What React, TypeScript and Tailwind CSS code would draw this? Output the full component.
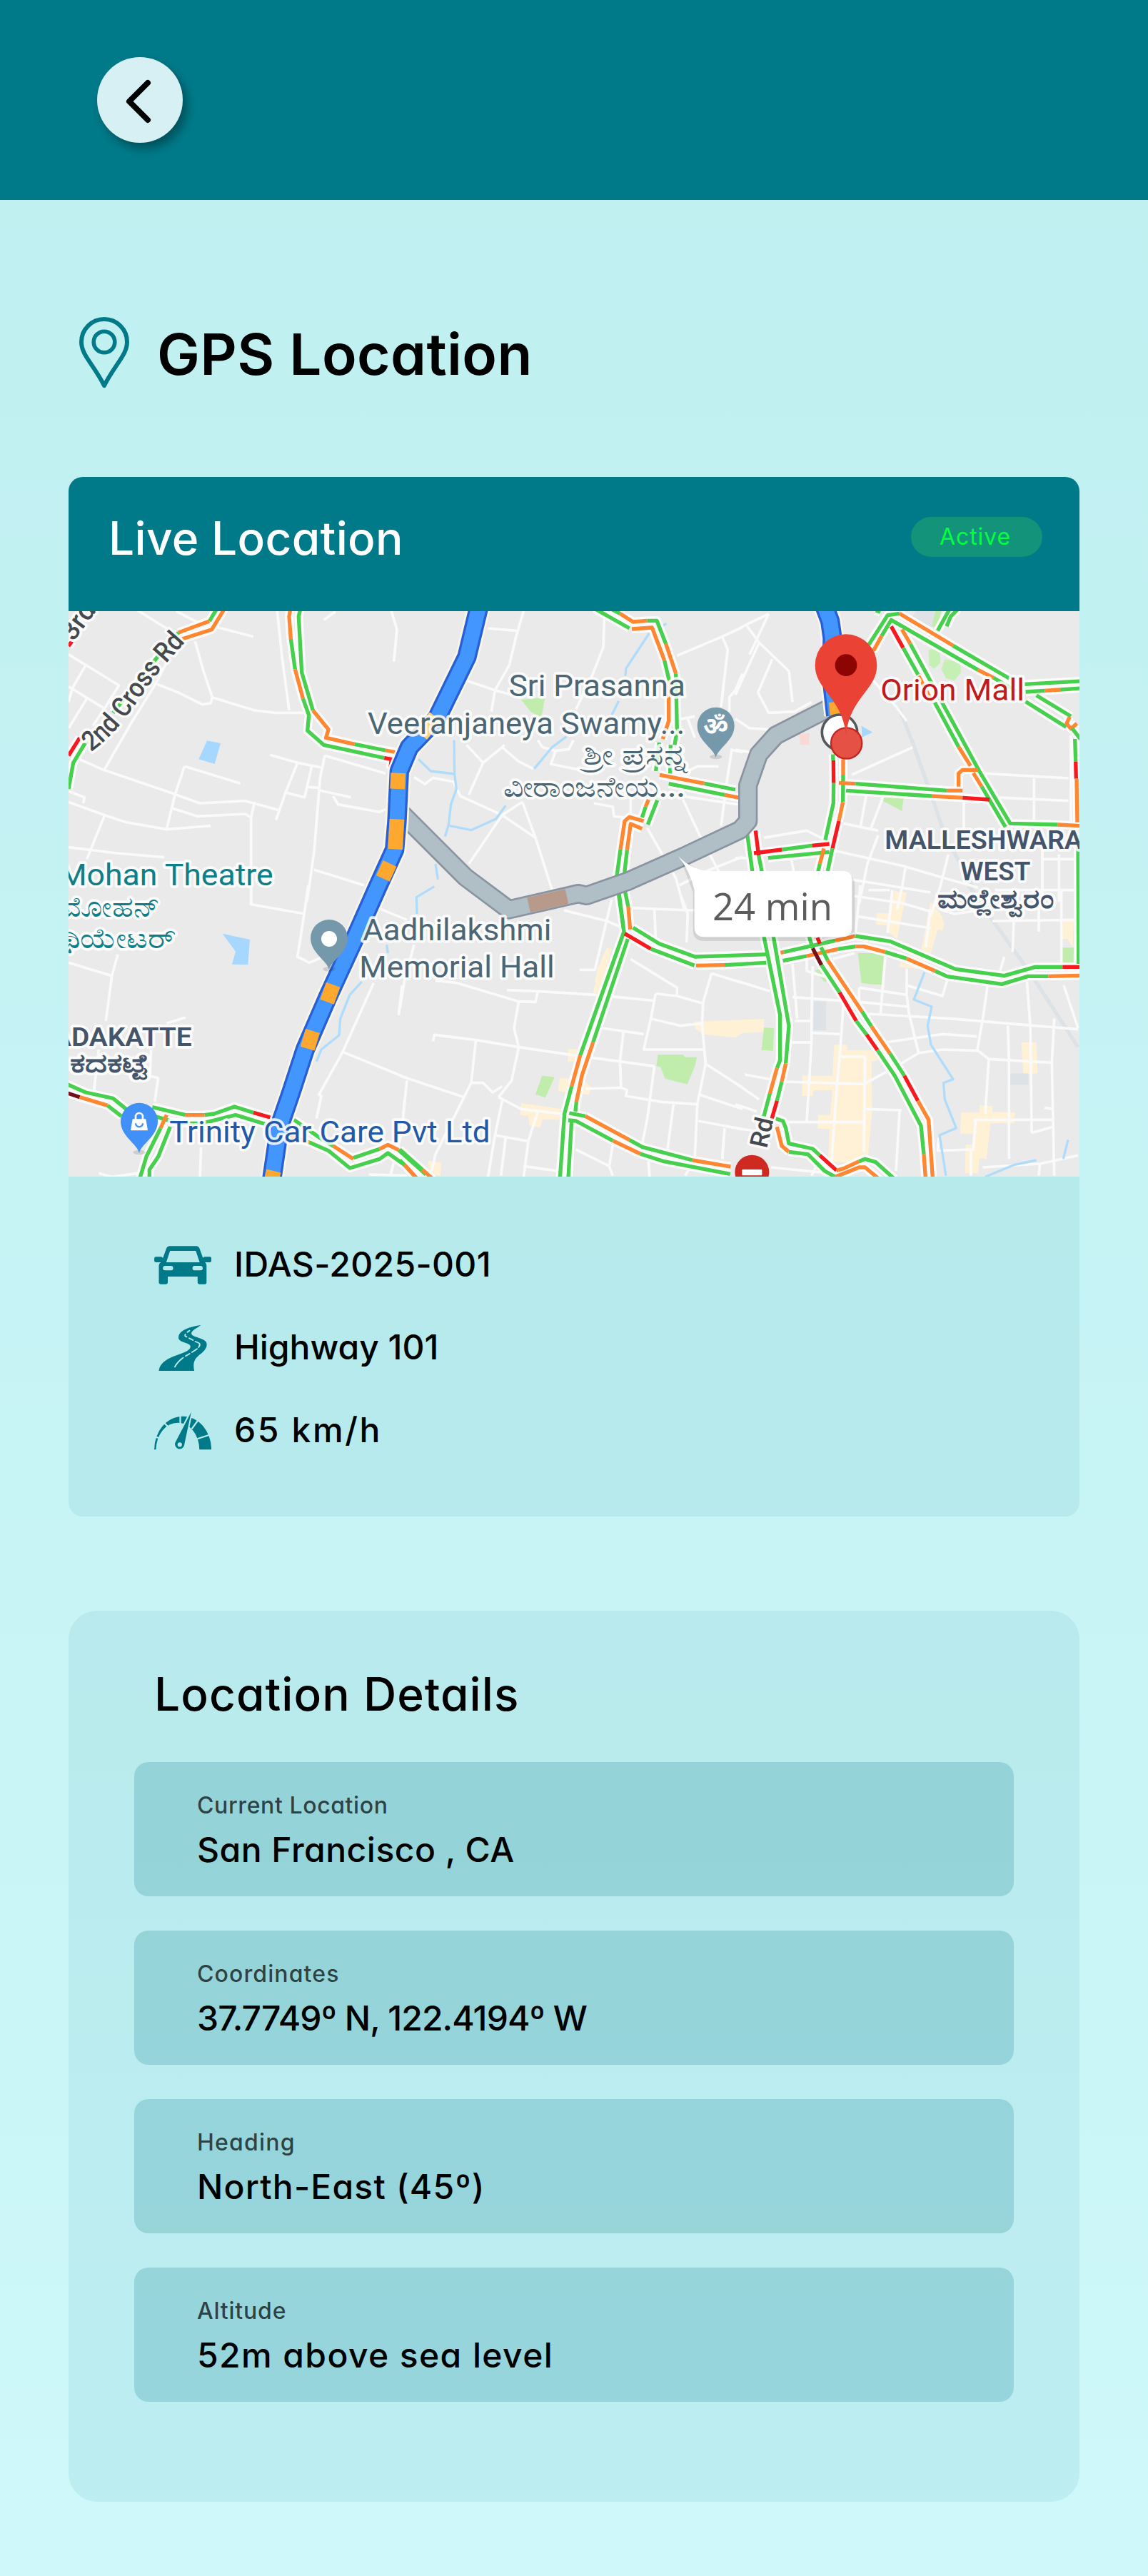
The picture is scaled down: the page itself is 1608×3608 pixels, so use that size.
import type { ReactNode } from "react";

/* ---------- Map data: six tiles, each drawn in its own coordinates ---------- */

type Tile = "A" | "B" | "C" | "D" | "E" | "F";

const tileOffset: Record<Tile, string> = {
  A: "translate(0 0)",
  B: "translate(1410 0)",
  C: "translate(2820 0)",
  D: "translate(0 1170)",
  E: "translate(1410 1170)",
  F: "translate(2820 1170)",
};

const streets: Record<Tile, string[]> = {
  A: [
    "300,10 430,90", "470,18 560,65 660,90 795,125", "550,145 585,270 622,380 615,405 580,410 480,360 390,325", "622,380 800,435 890,445 1010,445",
    "18,200 230,330 170,425 120,500", "90,245 35,340 18,400", "18,335 165,425", "95,385 18,510", "440,215 380,330 280,490 165,690",
    "18,620 165,685 430,775 570,825 760,815 905,855", "505,670 740,742", "505,670 465,790 430,935", "18,820 170,875 260,905 430,935 615,920",
    "450,845 560,880 760,870 785,885 785,1250 1010,1290", "170,875 95,1060", "18,1010 220,1035 420,1052", "800,820 785,885",
    "865,622 980,655 1080,675", "980,655 930,780 890,895", "930,780 1010,800 1040,670", "1095,625 1075,720 1050,1030 1020,1240",
    "1095,625 1350,700", "1070,770 1205,800", "1130,795 1150,830 1325,862 1350,850", "1025,757 1070,760", "895,18 915,210 945,435",
    "1375,18 1398,95 1385,230", "1090,55 1140,20", "1050,1105 1260,1170", "18,775 85,800 80,825",
  ],
  B: [
    "520,18 490,120 460,245 400,350 385,440", "370,90 490,100", "280,310 400,350 470,370", "860,40 855,170 800,310 740,430", "1165,205 1355,125 1440,85",
    "1355,125 1378,180 1350,420", "1440,280 1410,350 1385,380 1385,440", "1160,475 1240,460", "1210,470 1240,550",
    "280,580 350,655 430,590 440,580", "430,590 500,650 560,680", "350,655 290,790", "60,715 105,745 140,718 225,735 255,795 430,875 570,970 640,1190",
    "515,820 430,875 290,1080", "515,820 570,970", "580,560 600,590 655,605 635,660 780,690", "655,605 710,598 730,560", "815,825 895,840 900,880 945,885",
    "1190,700 1250,670 1340,670", "1395,600 1375,730 1350,920", "1190,810 1260,960 1345,1120", "1150,790 1420,830", "970,780 970,870",
    "1040,930 1160,1140 1195,1270", "1175,1170 1290,1110 1440,1050", "1390,600 1440,610",
  ],
  C: [
    "0,100 45,75 140,30", "45,75 100,150 225,270 240,400", "100,150 0,370", "140,30 60,200", "155,220 95,360 140,445 250,440 320,400", "0,470 60,510 140,515",
    "0,600 60,610", "490,705 745,590", "580,310 680,425 720,480", "455,910 600,940", "550,790 525,930", "620,800 570,930", "1050,700 1400,720", "1255,720 1255,910",
    "960,820 960,930", "1080,800 1400,815", "1410,540 1410,900", "120,970 300,940 380,980", "0,1055 70,1055", "235,1060 245,1110", "420,1025 710,1090 880,1140 1020,1180",
    "600,960 555,1080 520,1250", "715,1095 700,1180 680,1270", "480,1145 640,1170 820,1200", "895,1040 860,1180 820,1300", "1290,1010 1290,1240", "1360,1040 1360,1240", "1290,1060 1440,1060",
    "650,1190 560,1190", "1090,1190 1440,1190",
  ],
  D: [
    "18,325 200,380", "225,290 200,380 175,570", "430,580 510,555", "365,690 360,800 395,810 380,910", "145,690 125,860",
    "1025,0 1010,110 980,300 1030,325 1090,300", "1330,100 1440,145", "1300,410 1170,700 1070,880 1080,885 1060,980", "1170,700 1440,810", "1420,420 1405,545",
    "575,1100 570,1230", "145,1210 200,1225 310,1210", "1430,900 1420,1030 1370,1220", "1280,1215 1440,1220", "785,80 785,0",
  ],
  E: [
    "690,105 870,150 940,180", "890,60 820,355 755,355", "970,95 1215,105 1400,95", "1070,100 1075,220", "1180,40 1210,120 1205,240", "970,310 1165,430 1165,460",
    "1075,455 1165,465 1270,495", "1075,455 1055,560 1025,690 1280,690", "1055,560 1180,590 1270,580", "450,440 580,445 820,460 1070,485", "580,445 570,490 500,488 240,410 150,400",
    "500,488 480,600 500,680 470,820 415,890", "140,655 145,628 320,650 500,680 740,715 1070,760", "320,650 300,830 270,890 215,1000 150,1130 130,1220",
    "300,830 350,830 390,870 430,845", "0,800 270,890", "30,820 15,960", "415,890 510,940 680,960", "430,905 400,1050 370,1230", "400,1050 540,1075", "445,1060 425,1220",
    "580,950 540,1075 520,1230", "520,1180 660,1200", "850,600 1025,625", "940,615 925,740 930,850", "780,855 930,850 955,860 950,885 1100,910 1250,920",
    "1070,760 1040,980 1020,1080", "1310,370 1275,490 1270,580 1285,750 1250,920 1240,1140 1200,1220", "1285,750 1440,850", "1310,370 1440,410", "1260,880 1440,940",
    "1150,920 1125,1110", "740,1110 880,1180 895,1220", "895,1090 880,1180", "1045,1160 1050,1230", "1255,990 1440,1025", "1365,1020 1355,1150", "0,520 20,400 60,250",
  ],
  F: [
    "240,330 260,560", "240,470 520,490 725,510", "0,400 145,445", "250,570 320,570 325,340", "320,570 320,660 300,990", "320,620 440,625", "455,490 440,700 425,870 400,1220",
    "230,660 320,660", "40,795 200,825 540,835", "160,995 540,995", "540,835 660,770 770,705 870,690 1020,695 1065,730 1330,745", "440,720 545,720 540,1120",
    "545,940 700,945", "690,950 675,1200", "520,430 720,460 720,350", "520,430 520,490", "720,420 870,465 890,400", "630,300 610,540", "720,460 730,540 770,705",
    "560,540 900,560 1140,580 1440,605", "1060,420 1040,560 1015,700", "630,660 870,625 1015,635", "1145,590 1150,740 1150,1150", "1065,730 1050,960", "1225,400 1240,600 1245,1040",
    "1340,560 1330,745 1340,1220", "1000,985 1335,985", "1010,990 1000,1110 850,1115 855,1060", "1245,1040 1335,1015", "1300,935 1335,940", "990,1110 990,1220", "1380,420 1440,600",
    "1130,300 1110,370", "860,100 920,120 1060,100", "510,130 820,180", "660,20 640,200", "820,100 800,260", "1080,150 1440,145", "1170,150 1165,280", "1275,60 1275,195", "1370,20 1370,400",
    "1040,1185 1280,1170 1440,1135", "1280,1170 1275,1220", "300,310 300,360 380,385", "0,920 90,950", "0,830 100,900", "0,1020 70,1030", "150,1185 400,1210", "340,1180 320,1220", "410,310 500,285",
    "500,45 700,75 820,110", "525,0 505,200",
  ],
};

const areas: [Tile, string, string][] = [
  ["A", "#a6d8ff", "600,562 657,573 632,660 565,640"],
  ["D", "#a6d8ff", "665,203 780,228 772,334 705,332 720,278"],
  ["B", "#c0ecac", "510,390 610,380 595,465 550,440"],
  ["C", "#c0ecac", "840,18 865,18 850,90 822,80"],
  ["C", "#c6efb5", "812,180 858,175 862,235 835,260 815,245"],
  ["C", "#c6efb5", "880,220 945,235 948,275 920,310 885,300 866,262"],
  ["C", "#c0ecac", "622,800 707,800 700,858 620,815"],
  ["C", "#dfe3e8", "760,18 840,18 825,85 740,45"],
  ["C", "#a6d8ff", "530,500 577,527 532,548"],
  ["C", "#f8d9d6", "270,535 312,530 308,580 272,580"],
  ["C", "#d5efc8", "1425,560 1446,560 1446,640 1425,640"],
  ["E", "#c0ecac", "1085,712 1190,712 1200,722 1248,722 1240,760 1208,836 1115,812 1095,762 1078,760"],
  ["E", "#c0ecac", "598,800 650,806 612,892 570,878"],
  ["E", "#fff1d6", "510,915 680,940 680,985 600,985 590,1018 545,1010 540,970 505,965"],
  ["E", "#fff1d6", "708,688 745,688 745,740 705,740"],
  ["E", "#fff1d6", "672,810 770,815 805,850 795,880 665,865"],
  ["E", "#fff1d6", "870,262 890,265 850,440 812,460 830,350"],
  ["E", "#fff1d6", "1240,572 1530,562 1530,616 1440,620 1410,640 1275,626 1240,600"],
  ["E", "#fff1d6", "120,1158 175,1165 170,1220 118,1215"],
  ["F", "#c0ecac", "515,285 628,285 615,418 560,415 530,410"],
  ["F", "#c0ecac", "120,598 163,600 158,695 110,692"],
  ["F", "#c0ecac", "335,358 360,350 395,400 375,405"],
  ["F", "#c0ecac", "1370,262 1422,262 1420,330 1372,325"],
  ["F", "#fff1d6", "668,25 720,30 680,225 635,190 640,170 590,165 595,115 645,118"],
  ["F", "#fff1d6", "820,68 868,130 878,165 870,190 850,185 820,290 775,350 690,345 695,325 780,280"],
  ["F", "#fff1d6", "1378,140 1422,140 1418,260 1395,225 1368,225"],
  ["F", "#fff1d6", "415,670 470,670 470,692 540,692 600,690 600,735 572,740 575,945 555,1170 390,1160 395,1025 345,1022 348,965 398,965 408,860 330,860 325,885 280,885 280,800 408,800"],
  ["F", "#fff1d6", "1202,660 1265,660 1270,790 1210,795"],
  ["F", "#fff1d6", "1028,925 1080,928 1080,952 1175,955 1172,998 1072,1000 1055,1150 1025,1145 1020,1210 965,1208 968,1090 995,1088 998,1045 945,1045 948,955 1025,955"],
  ["F", "#dde2e7", "330,488 382,488 380,610 328,608"],
  ["F", "#dde2e7", "1155,790 1232,790 1232,838 1155,838"],
];

const water: [Tile, string][] = [
  ["B", "1120,70 1045,115 950,260 948,290"], ["B", "920,395 890,455"], ["B", "700,545 640,590 565,680"], ["B", "78,640 130,690 230,702 228,560"],
  ["B", "230,702 238,765 215,830 205,915 190,965"], ["B", "445,835 405,890 300,938 210,920"], ["B", "150,1080 160,1145"], ["B", "145,1175 70,1220 72,1290"],
  ["D", "1250,405 1200,460 1160,560 1155,630 1080,690 1060,740"], ["D", "1355,250 1360,285"],
  ["F", "795,365 750,480 825,510 808,590 822,670 915,815 875,830 880,900 928,1020 858,1050 885,1220"], ["F", "1265,1155 1170,1175 1050,1225"], ["F", "1398,1070 1378,1150"],
];

const railways: [Tile, string][] = [
  ["C", "690,430 745,570 830,810 880,960 1000,1180"],
  ["F", "980,0 1090,160 1240,370 1440,680"],
];

/* Traffic lanes: g = free, o = slow, r = heavy, d = blocked */
const laneColor: Record<string, string> = { g: "#47d04d", o: "#ff8731", r: "#f6191d", d: "#74101a" };
const lanes: [Tile, string, string][] = [
  ["A", "g", "640,10 610,60"], ["A", "o", "610,60 480,108"], ["A", "o", "672,10 620,95 495,135"],
  ["A", "g", "480,108 440,150 205,445"], ["A", "r", "65,550 18,625"], ["A", "g", "88,572 38,655 18,765"], ["A", "r", "18,165 32,145"],
  ["A", "o", "950,10 945,40 952,135"], ["A", "g", "952,135 970,262"], ["A", "o", "970,262 1003,385"], ["A", "g", "1003,385 1028,455 1022,520 1090,580 1345,635"], ["A", "r", "1345,635 1375,640 1370,680"],
  ["A", "g", "992,10 985,40 998,275 1045,435"], ["A", "o", "1045,435 1110,515 1100,550 1220,577"], ["A", "g", "1220,577 1350,603"], ["A", "o", "1350,603 1400,612"],
  ["B", "g", "820,8 965,90"], ["B", "g", "890,10 925,28"], ["B", "o", "925,28 980,63 1040,58"], ["B", "g", "1040,58 1080,58 1118,155"], ["B", "o", "1118,155 1160,280"], ["B", "g", "1160,280 1165,520 1155,580"],
  ["B", "o", "975,93 1060,87 1112,225"], ["B", "g", "1112,225 1132,310"], ["B", "o", "1130,310 1130,480 1105,555"],
  ["B", "g", "1138,580 1136,700"], ["B", "g", "1090,570 1076,690"], ["B", "o", "1092,706 1280,742"], ["B", "g", "1280,742 1410,768"], ["B", "g", "1130,743 1365,790"], ["B", "o", "1365,790 1430,803"],
  ["B", "o", "1045,810 1033,840"], ["B", "g", "1033,840 1018,885"], ["B", "g", "1082,812 1042,915"], ["B", "o", "1025,900 965,883 945,900 927,1020"], ["B", "o", "1018,932 970,912 955,1022"],
  ["B", "g", "927,1020 912,1130 940,1350"], ["B", "g", "955,1022 945,1110 945,1190 960,1260"],
  ["C", "g", "560,160 640,35 690,28"], ["C", "o", "690,28 915,163"], ["C", "g", "915,163 1150,300"], ["C", "g", "590,15 610,22"],
  ["C", "o", "580,185 615,122"], ["C", "g", "615,122 655,55 1020,265"], ["C", "o", "1020,265 1085,298"], ["C", "g", "1085,298 1180,355"],
  ["C", "g", "900,10 850,100"], ["C", "g", "935,10 905,40 888,82"],
  ["C", "r", "655,82 705,172"], ["C", "g", "705,172 768,285"], ["C", "o", "770,290 825,395"], ["C", "g", "838,402 938,588"], ["C", "o", "938,588 988,668"], ["C", "o", "1000,698 1035,755"], ["C", "g", "1035,755 1135,925"],
  ["C", "o", "700,95 735,155"], ["C", "g", "735,155 1025,690 1155,910 1355,915"], ["C", "o", "1355,915 1446,920"],
  ["C", "g", "1215,325 1450,312"], ["C", "g", "1220,357 1300,352"], ["C", "o", "1300,352 1365,348"], ["C", "g", "1365,348 1450,342"],
  ["C", "g", "1265,372 1410,460"], ["C", "g", "1220,398 1390,505"], ["C", "o", "1405,462 1392,490 1410,512 1435,490"], ["C", "g", "1415,510 1450,555"],
  ["C", "g", "1427,555 1430,650"], ["C", "r", "1430,650 1432,722"], ["C", "o", "1434,722 1437,905"], ["C", "g", "1440,960 1442,1500"],
  ["C", "g", "410,620 411,645"], ["C", "r", "412,645 413,740"], ["C", "g", "413,740 412,825 378,980"], ["C", "o", "453,640 453,705"], ["C", "g", "453,705 452,820"], ["C", "o", "452,820 435,900"], ["C", "r", "435,900 408,1015"], ["C", "g", "408,1015 388,1110"],
  ["C", "r", "395,996 322,1003"], ["C", "g", "322,1003 195,1020"], ["C", "r", "195,1020 78,1035"], ["C", "g", "395,1030 138,1055"], ["C", "o", "372,1015 355,1080"], ["C", "g", "355,1080 347,1115"],
  ["C", "r", "85,940 98,1045"], ["C", "g", "98,1045 112,1115"], ["C", "g", "50,955 72,1115"],
  ["C", "o", "435,740 505,743"], ["C", "g", "505,743 890,772"], ["C", "o", "890,772 955,772"], ["C", "g", "465,772 825,795"], ["C", "o", "825,795 955,802"], ["C", "r", "955,802 1068,810"], ["C", "o", "938,755 938,700 955,685 1020,685"],
  ["D", "g", "10,835 90,870 205,895 260,940"], ["D", "d", "10,872 65,890"], ["D", "o", "65,890 182,925"], ["D", "g", "182,925 240,970"],
  ["D", "g", "370,932 510,965"], ["D", "o", "510,965 590,965"], ["D", "g", "590,965 630,960 715,930 795,955"], ["D", "r", "795,955 875,978"],
  ["D", "g", "380,970 480,1000 580,1000 720,965 850,1005"], ["D", "g", "965,985 1080,1065 1130,1095"], ["D", "o", "1130,1095 1215,1150"], ["D", "g", "1215,1145 1325,1108"], ["D", "o", "1325,1108 1360,1090 1405,1112"], ["D", "g", "1405,1112 1520,1215"],
  ["D", "o", "950,1055 1030,1080"], ["D", "g", "1030,1080 1110,1115 1200,1188 1325,1150 1360,1125 1430,1175"], ["D", "o", "1430,1175 1480,1230"],
  ["D", "o", "430,965 405,1020"], ["D", "g", "405,1020 345,1140 318,1230"], ["D", "g", "445,1015 395,1140 358,1195 358,1230"],
  ["E", "g", "0,1110 95,1195"], ["E", "o", "95,1195 140,1235"], ["E", "g", "0,1155 20,1175"], ["E", "o", "20,1175 75,1235"],
  ["E", "o", "960,90 968,185"], ["E", "g", "920,40 942,195 758,715"], ["E", "g", "958,225 812,660"], ["E", "o", "812,660 765,800 742,910"], ["E", "g", "742,910 738,950"],
  ["E", "o", "758,715 722,845"], ["E", "g", "722,845 692,960 673,1230"], ["E", "g", "722,990 708,1230"],
  ["E", "g", "980,178 1090,245 1240,300 1550,290"], ["E", "r", "945,203 1055,267"], ["E", "g", "1055,267 1238,337"], ["E", "o", "1245,337 1365,335"], ["E", "g", "1365,335 1540,325"],
  ["E", "g", "712,957 780,970"], ["E", "o", "780,970 965,1070"], ["E", "g", "965,1070 1020,1100 1230,1155"], ["E", "o", "1230,1155 1390,1182"],
  ["E", "g", "708,987 740,990 895,1073"], ["E", "o", "895,1073 1010,1128"], ["E", "g", "1010,1128 1110,1160 1388,1213"],
  ["F", "o", "190,283 205,280"], ["F", "g", "205,280 420,232"], ["F", "o", "420,232 505,213"], ["F", "g", "505,213 650,235 925,352 1130,380 1260,343 1375,343"], ["F", "r", "1375,343 1450,343"],
  ["F", "g", "200,317 300,297"], ["F", "o", "300,297 430,268"], ["F", "g", "430,268 505,257"], ["F", "o", "505,257 540,257 630,280"], ["F", "g", "630,280 720,308"], ["F", "o", "720,308 840,360"], ["F", "g", "840,360 890,383 1120,415 1230,382 1315,382"], ["F", "o", "1315,382 1450,379"],
  ["F", "g", "120,215 188,545 188,735 175,768"], ["F", "o", "175,768 145,875"], ["F", "g", "145,875 120,970"],
  ["F", "g", "160,215 225,590 212,748"], ["F", "o", "212,748 195,825"], ["F", "g", "195,825 175,905"], ["F", "r", "175,905 152,985"],
  ["F", "g", "310,215 325,265"], ["F", "d", "325,265 362,335"], ["F", "g", "362,335 438,450"], ["F", "r", "438,450 508,570"], ["F", "g", "508,570 552,628"], ["F", "r", "552,628 597,692"], ["F", "g", "597,692 670,800 780,1010 792,1130"], ["F", "o", "792,1130 800,1240"],
  ["F", "r", "345,220 355,245"], ["F", "g", "360,260 388,315"], ["F", "o", "388,315 532,530"], ["F", "g", "532,530 572,593"], ["F", "o", "572,593 650,707"], ["F", "g", "650,707 710,800"], ["F", "r", "710,800 767,905"], ["F", "o", "767,905 812,985 830,1240"],
  ["F", "g", "170,980 200,990 212,1020 225,1085 325,1107 355,1135"], ["F", "r", "355,1135 425,1198"], ["F", "o", "425,1198 455,1190 520,1160"], ["F", "g", "520,1160 545,1150 590,1163 670,1235"],
  ["F", "o", "175,1015 195,1095 225,1120"], ["F", "g", "225,1120 305,1130 375,1200 420,1225"], ["F", "o", "420,1225 520,1185 545,1185 605,1235"],
];

const blueRoute = "1745,-10 1728,60 1692,210 1565,470 1450,590 1408,690 1398,900 1388,1020 1320,1170 1220,1395 1105,1645 1012,1860 950,2050 905,2180 870,2420";
const blueRouteEast = "3192,-10 3218,60 3228,130 3225,300 3242,455";
const greyRoute = "1412,862 1685,1135 1868,1272 2160,1205 2195,1213 2370,1152 2600,1050 2840,937 2873,900 2873,750 2918,620 2990,540 3215,425";
const slowParts = ["1403,698 1400,765", "1398,892 1391,1018", "1368,1078 1339,1141", "1130,1588 1104,1660", "1044,1782 1022,1856", "880,2370 868,2420"];

type MapLabel = { t: string; x: number; y: number; w?: number; s: number; c: string; weight?: number };
const slate = "#4b6674";
const labels: MapLabel[] = [
  { t: "Sri Prasanna", x: 1868, y: 375, w: 742, s: 126, c: slate },
  { t: "Veeranjaneya Swamy...", x: 1275, y: 533, w: 1333, s: 126, c: slate },
  { t: "ಶ್ರೀ ಪ್ರಸನ್ನ", x: 2180, y: 662, w: 440, s: 118, c: slate, weight: 500 },
  { t: "ವೀರಾಂಜನೇಯ...", x: 1846, y: 797, w: 764, s: 118, c: slate, weight: 500 },
  { t: "Orion Mall", x: 3430, y: 393, w: 605, s: 130, c: "#bf1a1c" },
  { t: "MALLESHWARA", x: 3448, y: 1017, w: 830, s: 112, c: "#44546b", weight: 600 },
  { t: "WEST", x: 3766, y: 1150, w: 294, s: 112, c: "#44546b", weight: 600 },
  { t: "ಮಲ್ಲೇಶ್ವರಂ", x: 3668, y: 1265, w: 490, s: 112, c: "#44546b", weight: 700 },
  { t: "Mohan Theatre", x: -22, y: 1170, w: 900, s: 130, c: "#0e7f88" },
  { t: "ಮೋಹನ್", x: -12, y: 1303, w: 415, s: 120, c: "#0e7f88", weight: 500 },
  { t: "ಥಿಯೇಟರ್", x: -22, y: 1435, w: 490, s: 120, c: "#0e7f88", weight: 500 },
  { t: "Aadhilakshmi", x: 1255, y: 1402, w: 792, s: 126, c: slate },
  { t: "Memorial Hall", x: 1240, y: 1558, w: 820, s: 126, c: slate },
  { t: "ADAKATTE", x: -48, y: 1845, w: 584, s: 112, c: "#44546b", weight: 600 },
  { t: "ಕದಕಟ್ಟೆ", x: 24, y: 1955, w: 332, s: 108, c: "#44546b", weight: 700 },
  { t: "Trinity Car Care Pvt Ltd", x: 442, y: 2250, w: 1348, s: 130, c: "#2159a8" },
];

function Pin({ x, y, color, children }: { x: number; y: number; color: string; children: ReactNode }) {
  return (
    <g transform={`translate(${x} ${y})`}>
      <ellipse cx="0" cy="130" rx="26" ry="10" fill="#000" opacity="0.12" />
      <path d="M0 134 C-6 96 -78 62 -78 0 A78 78 0 0 1 78 0 C78 62 6 96 0 134Z" fill={color} />
      {children}
    </g>
  );
}

function LiveMap() {
  return (
    <svg viewBox="18 18 4248 2376" preserveAspectRatio="none" className="block h-[792px] w-full" fontFamily="Roboto, 'Noto Sans', sans-serif">
      <rect x="0" y="0" width="4300" height="2420" fill="#eaeaea" />
      {areas.map(([t, c, p], i) => (
        <polygon key={i} points={p} fill={c} transform={tileOffset[t]} />
      ))}
      <g fill="none" stroke="#dde2e6" strokeWidth="16">
        {railways.map(([t, p], i) => (
          <polyline key={i} points={p} transform={tileOffset[t]} />
        ))}
      </g>
      <g fill="none" stroke="#fafafa" strokeWidth="11" strokeLinejoin="round">
        {(Object.keys(streets) as Tile[]).map((t) => (
          <g key={t} transform={tileOffset[t]}>
            {streets[t].map((p, i) => (
              <polyline key={i} points={p} />
            ))}
          </g>
        ))}
      </g>
      <g fill="none" stroke="#b0dcfb" strokeWidth="10" strokeLinejoin="round">
        {water.map(([t, p], i) => (
          <polyline key={i} points={p} transform={tileOffset[t]} />
        ))}
      </g>
      <g fill="none" stroke="#fdfbfc" strokeWidth="36" strokeLinejoin="round">
        {lanes.map(([t, , p], i) => (
          <polyline key={i} points={p} transform={tileOffset[t]} />
        ))}
      </g>
      <g fill="none" strokeWidth="16" strokeLinejoin="round">
        {lanes.map(([t, c, p], i) => (
          <polyline key={i} points={p} stroke={laneColor[c]} transform={tileOffset[t]} />
        ))}
      </g>

      <g fill="none" strokeLinejoin="round">
        <polyline points={greyRoute} stroke="#8a94a1" strokeWidth="82" />
        <polyline points={greyRoute} stroke="#b0bec5" strokeWidth="66" />
        <polyline points="1952,1253 2112,1217" stroke="#b89a8a" strokeWidth="64" />
        {[blueRoute, blueRouteEast].map((p, i) => (
          <g key={i}>
            <polyline points={p} stroke="#fbf6e4" strokeWidth="98" />
            <polyline points={p} stroke="#265fd8" strokeWidth="82" />
            <polyline points={p} stroke="#4496ff" strokeWidth="62" />
          </g>
        ))}
        {slowParts.map((p) => (
          <polyline key={p} points={p} stroke="#ffa82f" strokeWidth="62" />
        ))}
        <polyline points="1560,462 1500,538" stroke="#ffd27a" strokeWidth="62" />
        <polyline points="3238,400 3243,455" stroke="#ffa82f" strokeWidth="50" />
      </g>

      <g stroke="#fff" strokeOpacity="0.85" strokeWidth="22" strokeLinejoin="round" paintOrder="stroke">
        {labels.map((l) => (
          <text key={l.t} x={l.x} y={l.y} textLength={l.w} lengthAdjust="spacingAndGlyphs" fontSize={l.s} fill={l.c} fontWeight={l.weight ?? 400}>
            {l.t}
          </text>
        ))}
        <path id="cross-road" d="M112 610 C240 520 300 400 400 270 L520 135" fill="none" stroke="none" />
        <path id="third-road" d="M38 148 L178 -42" fill="none" stroke="none" />
        <text fontSize="116" fontWeight="500" fill="#45484d">
          <textPath href="#cross-road" textLength="612" lengthAdjust="spacingAndGlyphs">2nd Cross Rd</textPath>
        </text>
        <text fontSize="112" fontWeight="500" fill="#45484d">
          <textPath href="#third-road">3rd</textPath>
        </text>
        <text fontSize="106" fontWeight="500" fill="#45484d" transform="translate(2952 2278) rotate(-77)">Rd</text>
      </g>

      <Pin x={2738} y={500} color="#7599ab">
        <text x="0" y="36" textAnchor="middle" fontSize="104" fontWeight="700" fill="#fff">ॐ</text>
      </Pin>
      <Pin x={1113} y={1392} color="#7599ab">
        <circle cx="0" cy="3" r="33" fill="#fff" />
      </Pin>
      <Pin x={315} y={2162} color="#4190f7">
        <path d="M-28 -10 H28 L36 38 H-36Z" fill="#fff" />
        <path d="M-15 -8 V-20 A15 15 0 0 1 15 -20 V-8" fill="none" stroke="#fff" strokeWidth="8" />
        <path d="M-15 8 A15 15 0 0 0 15 8" fill="none" stroke="#4190f7" strokeWidth="7" />
      </Pin>

      <circle cx="3258" cy="527" r="74" fill="#fff" stroke="#55585c" strokeWidth="11" />
      <circle cx="3287" cy="573" r="65" fill="#e55145" stroke="#c3261f" strokeWidth="7" />
      <path d="M3285 540 C3270 380 3155 350 3155 245 A130 130 0 0 1 3415 245 C3415 350 3300 380 3285 540Z" fill="#ea4335" />
      <circle cx="3285" cy="245" r="46" fill="#8c0503" />

      <circle cx="2890" cy="2375" r="72" fill="#cf2a22" />
      <rect x="2848" y="2364" width="84" height="25" rx="3" fill="#fff" />

      <g fill="#000" opacity="0.1">
        <path d="M2590 1060 L2700 1126 H3275 Q3322 1126 3322 1170 V1362 Q3322 1404 3275 1404 H2690 Q2642 1404 2642 1360 V1200Z" />
      </g>
      <path d="M2580 1048 Q2640 1108 2710 1110 H3270 Q3310 1110 3310 1150 V1345 Q3310 1387 3270 1387 H2690 Q2648 1387 2648 1345 V1190 Q2630 1110 2580 1048Z" fill="#fff" />
      <text x="2724" y="1317" textLength="504" lengthAdjust="spacingAndGlyphs" fontSize="160" fontFamily="'Open Sans', sans-serif" fill="#5c5c5c">24 min</text>
    </svg>
  );
}

/* ---------- Icons ---------- */

function PinIcon() {
  return (
    <svg viewBox="111 444 70 100" className="h-[100px] w-[70px] shrink-0" fill="none" stroke="#007a89">
      <path d="M146 540 C130 509 114 497 114 479 A32 32 0 0 1 178 479 C178 497 162 509 146 540Z" strokeWidth="6" strokeLinejoin="round" />
      <circle cx="146" cy="479" r="14.8" strokeWidth="5.6" />
    </svg>
  );
}

const iconClass = "h-[68px] w-20 shrink-0";

function CarIcon() {
  return (
    <svg viewBox="216 1736 80 68" className={iconClass}>
      <g transform="translate(180 1700) scale(0.35714 0.33333)">
        <path
          fill="#007a89"
          fillRule="evenodd"
          d="M148 147 Q152 136 162 136 H266 Q275 136 279 147 L292 186 Q293 181 300 181 H318 Q325 181 325 187 V197 Q325 204 318 204 H300 Q306 209 306 218 V288 Q306 296 299 296 H278 Q271 296 271 289 V264 H154 V289 Q154 296 147 296 H127 Q119 296 119 288 V218 Q119 209 127 204 H108 Q101 204 101 197 V188 Q101 181 108 181 H127 Q132 181 135 186Z M163 156 L148 204 H279 L264 156Z M144 219 A9 9.5 0 0 0 144 238 H166 A9 9.5 0 0 0 166 219Z M260 219 A9 9.5 0 0 0 260 238 H282 A9 9.5 0 0 0 282 219Z"
        />
      </g>
    </svg>
  );
}

function RoadIcon() {
  return (
    <svg viewBox="216 1852 80 68" className={iconClass}>
      <g transform="translate(180 1700) scale(0.35714 0.33333)">
        <path
          fill="#007a89"
          d="M284 468 C245 474 196 488 196 520 C196 544 243 540 243 557 C243 578 206 586 175 600 C146 612 121 632 119 660 H258 C250 620 262 606 285 587 C300 574 307 562 307 548 C307 530 280 524 262 517 C240 508 244 498 258 487 C267 480 278 473 284 468Z"
        />
        <g fill="none" stroke="#b7ebed" strokeWidth="5.5" strokeLinecap="round">
          <path d="M182 643 C192 622 203 614 214 605" />
          <path d="M224 598 L240 588" />
          <path d="M249 582 L269 568" />
          <path d="M262 537 C280 543 284 548 275 561" />
          <path d="M238 523 L253 531" />
          <path d="M223 507 C220 512 222 515 228 517" />
          <path d="M231 497 L239 491" />
        </g>
      </g>
    </svg>
  );
}

function SpeedIcon() {
  return (
    <svg viewBox="216 1968 80 68" className={iconClass}>
      <g transform="translate(180 1700) scale(0.35714 0.33333)">
        <path fill="#007a89" d="M101 991 A112 140 0 0 1 325 991 H278 A85 113 0 0 0 108 991Z" />
        <g stroke="#b7ebed" strokeWidth="6.5">
          <path d="M98 935 L118 942 M138 876 L154 894 M203 846 V884 M274 866 L248 904 M326 926 L270 946" />
        </g>
        <path d="M246 833 L217 976 A18 20 0 0 1 183 963Z" fill="#007a89" stroke="#b7ebed" strokeWidth="12" />
        <path d="M246 833 L218 974 A18 20 0 1 1 183 962Z" fill="#007a89" />
        <ellipse cx="201" cy="970" rx="8.5" ry="9.5" fill="#b7ebed" />
      </g>
    </svg>
  );
}

/* ---------- Page ---------- */

const vehicle = [
  { icon: <CarIcon />, text: "IDAS-2025-001", spacing: "tracking-[0.35px]" },
  { icon: <RoadIcon />, text: "Highway 101", spacing: "tracking-[0px]" },
  { icon: <SpeedIcon />, text: "65 km/h", spacing: "tracking-[2.6px]" },
];

const details = [
  { label: "Current Location", ls: "tracking-[0.6px]", value: "San Francisco , CA", vs: "tracking-[0.5px]" },
  { label: "Coordinates", ls: "tracking-[1.1px]", value: "37.7749º N, 122.4194º W", vs: "tracking-[-0.9px]" },
  { label: "Heading", ls: "tracking-[1.2px]", value: "North-East (45º)", vs: "tracking-[1.2px]" },
  { label: "Altitude", ls: "tracking-[0.8px]", value: "52m above sea level", vs: "tracking-[1.4px]" },
];

export default function App() {
  return (
    <div className="h-[3608px] w-full bg-linear-to-b from-[#bfeff0] to-[#cef8fa] font-['Inter',sans-serif] whitespace-nowrap text-black [font-feature-settings:'cv11']">
      <header className="h-[280px] bg-[#007a89] pt-20 pl-[136px]">
        <button className="flex size-[120px] items-center justify-center rounded-full bg-[#d6f0f4] shadow-[6px_8px_14px_rgba(0,0,0,0.35)]">
          <svg viewBox="136 80 120 120" className="size-[120px]" fill="none" stroke="#000" strokeWidth="8" strokeLinecap="round" strokeLinejoin="round">
            <path d="M207 116 L181 142 L207 168" />
          </svg>
        </button>
      </header>

      <main className="px-24 pt-[164px]">
        <div className="flex h-[100px] items-start pl-[15px]">
          <PinIcon />
          <h1 className="mt-3 ml-[39px] text-[80px] leading-[80px] font-semibold tracking-[0.4px]">GPS Location</h1>
        </div>

        <section className="mt-[124px] overflow-hidden rounded-[20px] bg-[#007a89]/8">
          <div className="flex h-[188px] items-start justify-between bg-[#007a89] pr-[52px] pl-14">
            <h2 className="mt-[54px] text-[64px] leading-[64px] font-medium tracking-[0.3px] text-white">Live Location</h2>
            <span className="mt-14 flex h-14 w-[184px] items-center justify-center rounded-[28px] bg-[#13937a] pr-1 text-[32px] leading-8 tracking-[0.9px] text-[#00ff3c]">
              Active
            </span>
          </div>
          <LiveMap />
          <ul className="flex h-[476px] flex-col gap-[68px] pt-[98px] pl-[120px]">
            {vehicle.map((v) => (
              <li key={v.text} className="flex h-12 items-center gap-8">
                {v.icon}
                <span className={`mt-0.5 text-[48px] leading-[48px] font-medium ${v.spacing}`}>{v.text}</span>
              </li>
            ))}
          </ul>
        </section>

        <section className="mt-[132px] h-[1248px] rounded-[40px] bg-[#007a89]/8 px-[92px] pt-[85px]">
          <h2 className="pl-7 text-[64px] leading-[64px] font-medium tracking-[1.05px]">Location Details</h2>
          <dl className="mt-[63px] flex flex-col gap-12">
            {details.map((d) => (
              <div key={d.label} className="h-[188px] rounded-[20px] bg-[#007a89]/20 pt-[45px] pl-[88px]">
                <dt className={`text-[32px] leading-8 font-[450] text-black/70 ${d.ls}`}>{d.label}</dt>
                <dd className={`mt-[22px] text-[48px] leading-[48px] font-medium ${d.vs}`}>{d.value}</dd>
              </div>
            ))}
          </dl>
        </section>
      </main>
    </div>
  );
}
